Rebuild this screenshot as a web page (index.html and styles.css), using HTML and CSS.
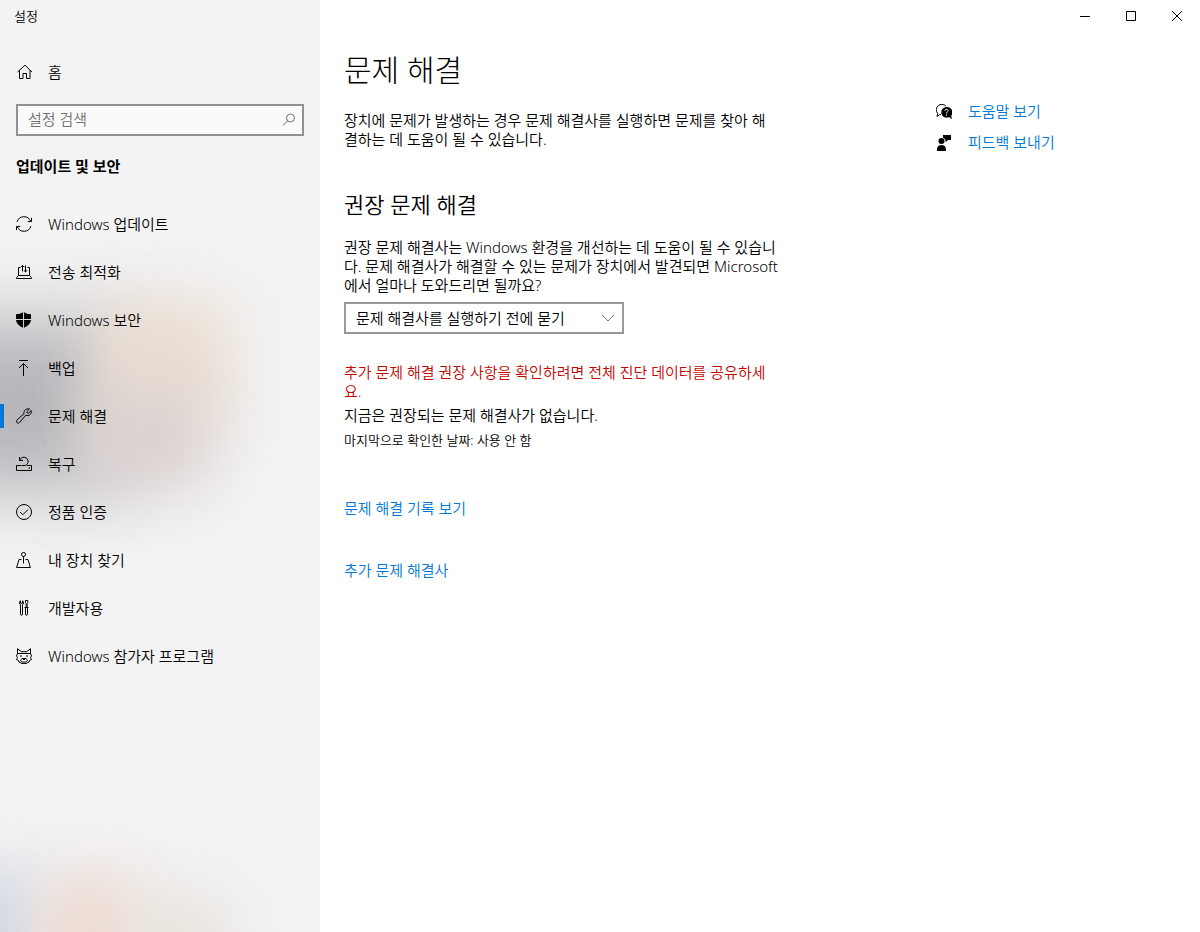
FILE: index.html
```html
<!DOCTYPE html>
<html lang="ko">
<head>
<meta charset="utf-8">
<meta name="viewport" content="width=device-width, initial-scale=1">
<title>설정</title>
<link rel="stylesheet" href="styles.css">
</head>
<body>
<div class="window">
  <aside class="sidebar">
    <div class="backdrop" aria-hidden="true">
      <span class="glow glow-gray"></span>
      <span class="glow glow-peach"></span>
      <span class="glow glow-rose"></span>
      <span class="glow glow-blue"></span>
      <span class="glow glow-coral"></span>
      <span class="glow glow-sand"></span>
    </div>
    <div class="app-name">설정</div>
    <a class="nav-link home" href="#home">
      <svg class="icon" viewBox="0 0 16 16"><path d="M1.500 8 9 1.200 16 8M3.500 6.400v8.100h3.500V9.500h3.500v5H14V6.400"/></svg>
      <span>홈</span>
    </a>
    <div class="search">
      <input class="search-input" type="search" placeholder="설정 검색" aria-label="설정 검색">
      <svg class="search-icon" viewBox="0 0 14 14"><circle cx="8.500" cy="5" r="4"/><path d="M5.600 7.900 1 12.500"/></svg>
    </div>
    <h2 class="section-name">업데이트 및 보안</h2>
    <nav class="nav">
      <a class="nav-link" href="#update">
        <svg class="icon" viewBox="0 0 16 16"><path d="M1.100 5.800A7.200 7.200 0 0 1 14.700 5.300M15.500 1.800v3.800h-3.800M14.900 10.200A7.200 7.200 0 0 1 1.300 10.700M.5 14.200v-3.800h3.800"/></svg>
        <span>Windows 업데이트</span>
      </a>
      <a class="nav-link" href="#delivery">
        <svg class="icon" viewBox="0 0 16 16"><path d="M4.500 3.500h-2v8M13.500 11.500V3.500h-2M2.500 11.500.5 13.500v1h15v-1L13.500 11.500ZM6.500 7.500V1.500M4.700 3.200l1.800-1.800 1.800 1.800M9.500 1.500V8M7.900 6.300l1.600 1.600 1.800-1.800"/></svg>
        <span>전송 최적화</span>
      </a>
      <a class="nav-link" href="#security">
        <svg class="icon" viewBox="0 0 16 16"><path class="solid" d="M7 0.300V7H0V2.300C3 2.300 5 1.500 7 .3ZM8 .3C10 1.500 12 2.300 15 2.300V7H8ZM0 8h7v7.700C3 14 .4 11.500 0 8ZM8 8h7c-.4 3.500-3 6-7 7.700Z"/></svg>
        <span>Windows 보안</span>
      </a>
      <a class="nav-link" href="#backup">
        <svg class="icon" viewBox="0 0 16 16"><path d="M3 .5h9M7.500 16V3.500M3 8l4.500-4.500L12 8"/></svg>
        <span>백업</span>
      </a>
      <a class="nav-link current" href="#troubleshoot" aria-current="page">
        <svg class="icon" viewBox="0 0 16 16"><path d="M13.600 1 10.900 3.700l.3 1.200 1.300.3 2.800-2.700c.6 2.800-1.200 5.300-4.300 5l-1.300-.3-5.800 7c-.8 1-2 1.200-2.800.5-.9-.8-.8-2.100.1-2.900l6.800-6C7.500 2.300 10 .2 13.600 1Z"/></svg>
        <span>문제 해결</span>
      </a>
      <a class="nav-link" href="#recovery">
        <svg class="icon" viewBox="0 0 16 16"><path d="M5 9.500H.5v5h15v-5H11M12.500 12h1.500M3.500 1v3.500H7M3.700 4.300A4.300 4.300 0 1 1 9.500 9.500H5.500"/></svg>
        <span>복구</span>
      </a>
      <a class="nav-link" href="#activation">
        <svg class="icon" viewBox="0 0 16 16"><circle cx="8" cy="8" r="7.500"/><path d="M4 8l2.800 2.800L12 5.500"/></svg>
        <span>정품 인증</span>
      </a>
      <a class="nav-link" href="#find">
        <svg class="icon" viewBox="0 0 16 16"><circle cx="7.500" cy="2.500" r="2"/><path d="M7.500 4.500v7M5.500 7.500H3L.6 15.500h13.800L12 7.500H9.500"/></svg>
        <span>내 장치 찾기</span>
      </a>
      <a class="nav-link" href="#developers">
        <svg class="icon" viewBox="0 0 16 16"><path d="M4.500.8C3 1.300 3 4 4.500 4.800v9c0 2 2 2 2 0v-9C8 4 8 1.300 6.500.8v2.500h-2ZM9.500.5h2.300v2l-.7 1.200V7.500h-1V3.700L9.500 2.500ZM8.500 7.500h4M9.500 7.500v6.300c0 2 2 2 2 0V7.500"/></svg>
        <span>개발자용</span>
      </a>
      <a class="nav-link" href="#insider">
        <svg class="icon" viewBox="0 0 16 16"><path d="M1.500 6V.7l3.700 3h5.600l3.700-3V6M1 5.500h14M1.500 5.500.5 8l1 1.500-1 2 2 1 .5 1.500 3 1.500h4l3-1.500.5-1.500 2-1-1-2 1-1.500-1-2.500M4 8h2M10 8h2M4.500 12.500 6 10.500h4l1.500 2-1.500 1.500H6ZM7 11.500h2"/></svg>
        <span>Windows 참가자 프로그램</span>
      </a>
    </nav>
  </aside>

  <div class="page">
    <div class="window-controls">
      <button class="window-button" type="button" aria-label="최소화"><svg class="window-glyph" viewBox="0 0 10 10"><path d="M0 5.500h10"/></svg></button>
      <button class="window-button" type="button" aria-label="최대화"><svg class="window-glyph" viewBox="0 0 10 10"><path d="M.5.5h9v9h-9Z"/></svg></button>
      <button class="window-button" type="button" aria-label="닫기"><svg class="window-glyph" viewBox="0 0 10 10"><path d="m0 0 10 10M10 0 0 10"/></svg></button>
    </div>
    <div class="columns">
      <main class="content">
        <h1 class="title">문제 해결</h1>
        <p class="text intro">장치에 문제가 발생하는 경우 문제 해결사를 실행하면 문제를 찾아 해<br>결하는 데 도움이 될 수 있습니다.</p>
        <h2 class="subtitle">권장 문제 해결</h2>
        <label class="text" for="mode">권장 문제 해결사는 Windows 환경을 개선하는 데 도움이 될 수 있습니<br>다. 문제 해결사가 해결할 수 있는 문제가 장치에서 발견되면 Microsoft<br>에서 얼마나 도와드리면 될까요?</label>
        <div class="dropdown">
          <select class="dropdown-select" id="mode">
            <option>문제 해결사를 실행하기 전에 묻기</option>
          </select>
          <svg class="dropdown-arrow" viewBox="0 0 14 8"><path d="m1 1 6 6 6-6"/></svg>
        </div>
        <p class="text warning">추가 문제 해결 권장 사항을 확인하려면 전체 진단 데이터를 공유하세<br>요.</p>
        <p class="text status">지금은 권장되는 문제 해결사가 없습니다.</p>
        <p class="caption">마지막으로 확인한 날짜: 사용 안 함</p>
        <a class="link history" href="#history">문제 해결 기록 보기</a>
        <a class="link more" href="#more">추가 문제 해결사</a>
      </main>
      <aside class="related">
        <a class="related-link" href="#help">
          <svg class="icon" viewBox="0 0 16 16"><path d="M5 10.700H3.500L1 12.500l.7-3A5.200 5.200 0 1 1 10 2.200"/><path class="solid" d="M10.500 3a5.300 5.300 0 1 0 2.500 10l3 2.300-.8-3.600A5.300 5.300 0 0 0 10.500 3Z"/><path class="light" d="M8.800 6.800c.1-2 3.400-1.900 3.300 0 0 1.200-1.600 1.200-1.600 2.600M10.500 10.500v1.200"/></svg>
          <span>도움말 보기</span>
        </a>
        <a class="related-link" href="#feedback">
          <svg class="icon" viewBox="0 0 16 16"><circle class="solid" cx="5.500" cy="6" r="3"/><path class="solid" d="M1 16v-2c0-5.300 9-5.300 9 0v2ZM7 0h8v5h-3l-2.500 2.200V5L8 3.200 7 2.500Z"/></svg>
          <span>피드백 보내기</span>
        </a>
      </aside>
    </div>
  </div>
</div>
</body>
</html>
```
FILE: styles.css
```css
* { box-sizing: border-box; }

body {
  margin: 0;
  background: #fff;
  color: #000;
  font-family: "Noto Sans", "Noto Sans CJK KR", sans-serif;
  font-size: 15px;
  font-weight: 350;
  line-height: 19px;
}

h1, h2, p { margin: 0; font-weight: 350; }
a { color: inherit; text-decoration: none; }
svg { display: block; fill: none; stroke: currentColor; }

.window {
  display: grid;
  grid-template-columns: 320px 1fr;
  min-height: 100vh;
}

.sidebar {
  position: relative;
  isolation: isolate;
  overflow: hidden;
  background: #f3f3f3;
}

.backdrop { position: absolute; inset: 0; z-index: -1; }
.glow { position: absolute; filter: blur(30px); }
.glow-gray { left: -100px; top: 320px; width: 225px; height: 170px; background: #b6b6bb; filter: blur(36px); }
.glow-peach { left: 95px; top: 300px; width: 135px; height: 130px; background: #eaddd1; }
.glow-rose { left: 80px; top: 390px; width: 130px; height: 100px; background: #dbd2d0; }
.glow-blue { left: -60px; bottom: -60px; width: 95px; height: 120px; background: #cdd6e4; }
.glow-coral { left: 40px; bottom: -60px; width: 100px; height: 115px; background: #ecd9d0; }
.glow-sand { left: 130px; bottom: -60px; width: 100px; height: 95px; background: #e8e3dc; }

.app-name { padding: 7px 14px; font-size: 13px; line-height: 18px; }

.icon { flex: none; width: 16px; height: 16px; }
.solid { fill: currentColor; stroke: none; }
.light { stroke: #fff; }

.nav-link {
  display: flex;
  align-items: center;
  gap: 16px;
  height: 48px;
  padding: 0 16px;
}
.home { margin-top: 16px; }

.search { position: relative; margin: 8px 16px 0; }
.search-input {
  display: block;
  width: 100%;
  height: 32px;
  padding: 0 30px 2px 10px;
  border: 2px solid #919191;
  border-radius: 0;
  outline: 0;
  appearance: none;
  background: #fafafa;
  color: #000;
  font: inherit;
}
.search-input::placeholder { color: #707070; opacity: 1; }
.search-icon { position: absolute; right: 8px; top: 9px; width: 14px; height: 14px; color: #707070; }

.section-name { padding: 21px 16px 0; font-size: 15px; font-weight: 700; }
.nav { margin-top: 24px; }
.current { position: relative; }
.current::before {
  content: "";
  position: absolute;
  left: 0;
  top: 12px;
  width: 4px;
  height: 24px;
  background: #0078d7;
}

.window-controls { display: flex; justify-content: flex-end; }
.window-button {
  display: grid;
  place-items: center;
  width: 46px;
  height: 32px;
  padding: 0;
  border: 0;
  background: none;
  color: #000;
}
.window-glyph { width: 10px; height: 10px; }

.columns {
  display: grid;
  grid-template-columns: minmax(0, 448px) minmax(200px, 264px);
  column-gap: 144px;
  padding: 0 0 0 24px;
}

.content { display: flex; flex-direction: column; align-items: flex-start; white-space: nowrap; }
.title { margin-top: 18px; font-size: 30px; line-height: 40px; font-weight: 300; }
.intro { margin-top: 21px; }
.subtitle { margin-top: 41px; font-size: 22px; line-height: 28px; }
.subtitle + .text { margin-top: 20px; }

.dropdown { position: relative; width: 280px; margin-top: 7px; }
.dropdown-select {
  display: block;
  width: 100%;
  height: 32px;
  padding: 0 30px 0 10px;
  border: 2px solid #999;
  border-radius: 0;
  appearance: none;
  background: #fff;
  color: #000;
  font: inherit;
}
.dropdown-arrow { position: absolute; right: 9px; top: 12px; width: 14px; height: 8px; color: #777; pointer-events: none; }

.warning { margin-top: 29px; color: #c50500; }
.status { margin-top: 5px; }
.caption { margin-top: 6px; font-size: 13px; line-height: 18px; }
.link { color: #0078d7; }
.history { margin-top: 50px; }
.more { margin-top: 43px; }

.related { display: flex; flex-direction: column; gap: 12px; padding-top: 70px; }
.related-link { display: flex; align-items: center; gap: 16px; color: #0078d7; }
.related-link .icon { color: #000; }
```
